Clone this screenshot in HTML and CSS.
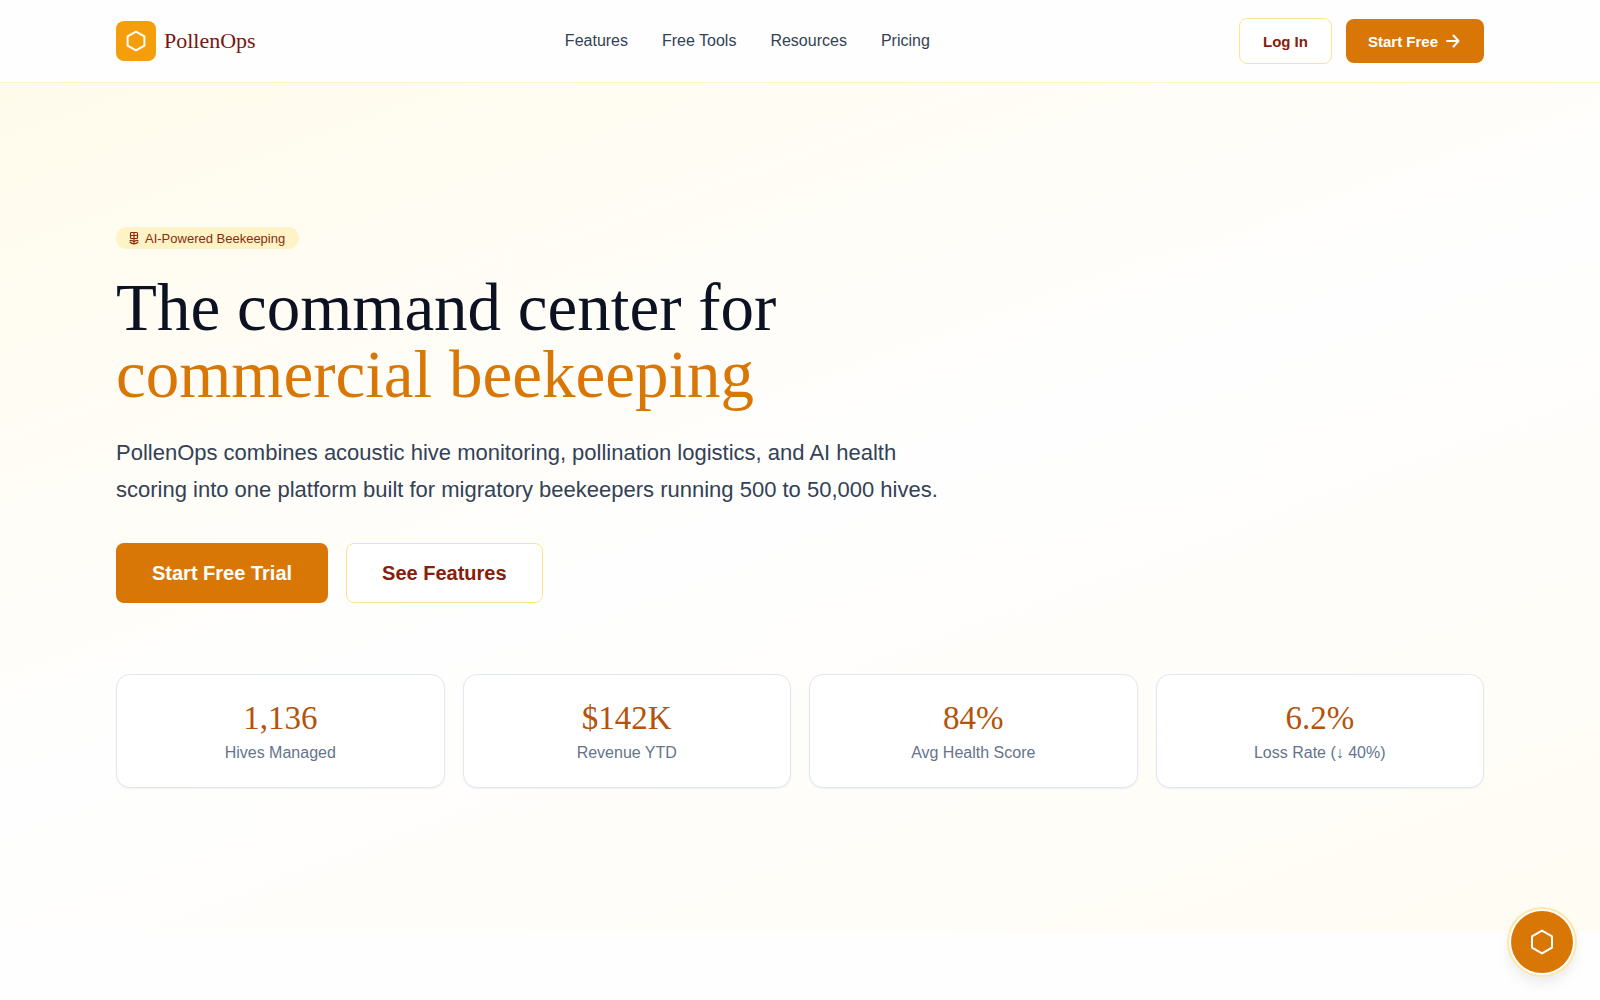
FILE: index.html
```html
<!DOCTYPE html>
<html lang="en">
  <head>
    <meta charset="UTF-8" />
    <meta name="viewport" content="width=device-width, initial-scale=1.0" />
    <title>PollenOps</title>
    <link rel="stylesheet" href="styles.css">
  </head>
  <body>
    <header class="header">
      <div class="container header-inner">
        <a href="#" class="logo">
          <span class="logo-mark">
            <svg width="24" height="24" viewBox="0 0 24 24"><path d="M12 2.6 L20.4 7.3 V16.7 L12 21.4 L3.6 16.7 V7.3 Z" /></svg>
          </span>
          <span>PollenOps</span>
        </a>
        <nav class="nav">
          <a href="#features">Features</a>
          <a href="#tools">Free Tools</a>
          <a href="#resources">Resources</a>
          <a href="#pricing">Pricing</a>
        </nav>
        <div class="actions">
          <button class="btn btn-outline">Log In</button>
          <button class="btn btn-primary">
            Start Free
            <svg width="16" height="16" viewBox="0 0 16 16"><path d="M1 8 H12.5 M7.5 2.5 L12.5 8 L7.5 13.5" /></svg>
          </button>
        </div>
      </div>
    </header>

    <main class="hero">
      <div class="container">
        <div class="badge">
          <svg width="10" height="14" viewBox="0 0 10 14">
            <rect x="1.5" y="1.5" width="7" height="6" rx="1" />
            <path d="M1.5 4.5 H8.5 M5 1.5 V12.5 M1 9.5 Q3.5 9 5 11 Q6.5 9 9 9.5 M1 11 Q2.5 12.8 5 12.8 Q7.5 12.8 9 11" />
          </svg>
          AI-Powered Beekeeping
        </div>
        <h1>The command center for<br><span>commercial beekeeping</span></h1>
        <p class="lead">PollenOps combines acoustic hive monitoring, pollination logistics, and AI health scoring into one platform built for migratory beekeepers running 500 to 50,000 hives.</p>
        <div class="cta">
          <button class="btn btn-primary btn-large">Start Free Trial</button>
          <button class="btn btn-outline btn-large" id="features">See Features</button>
        </div>
        <div class="stats">
          <div class="stat">
            <div class="stat-value">1,136</div>
            <div class="stat-label">Hives Managed</div>
          </div>
          <div class="stat">
            <div class="stat-value">$142K</div>
            <div class="stat-label">Revenue YTD</div>
          </div>
          <div class="stat">
            <div class="stat-value">84%</div>
            <div class="stat-label">Avg Health Score</div>
          </div>
          <div class="stat">
            <div class="stat-value">6.2%</div>
            <div class="stat-label">Loss Rate (↓ 40%)</div>
          </div>
        </div>
      </div>
    </main>

    <button class="fab" aria-label="Open assistant">
      <svg width="28" height="28" viewBox="0 0 28 28"><path d="M14 2.6 L24 8.4 V19.6 L14 25.4 L4 19.6 V8.4 Z" /></svg>
    </button>
  </body>
</html>
```
FILE: styles.css
```css
* {
  box-sizing: border-box;
}

body {
  margin: 0;
  font-family: "Liberation Sans", Arial, sans-serif;
  background-color: #fefefe;
  color: #0c1222;
}

a {
  color: inherit;
  text-decoration: none;
}

button {
  font-family: inherit;
  cursor: pointer;
}

svg {
  fill: none;
  stroke: currentColor;
  stroke-width: 2;
  stroke-linejoin: round;
  stroke-linecap: round;
}

.container {
  max-width: 1416px;
  margin: 0 auto;
  padding: 0 24px;
}

/* Header */
.header {
  background-color: #fefefe;
  border-bottom: 1px solid #fef3c7;
}

.header-inner {
  display: flex;
  justify-content: space-between;
  align-items: center;
  padding-top: 18px;
  padding-bottom: 18px;
}

.logo {
  display: flex;
  align-items: center;
  gap: 8px;
  font-family: "Liberation Serif", "Times New Roman", serif;
  font-size: 22px;
  color: #78150f;
}

.logo-mark {
  display: flex;
  align-items: center;
  justify-content: center;
  width: 40px;
  height: 40px;
  border-radius: 8px;
  background-color: #f59e0b;
  color: #ffffff;
}

.nav {
  display: flex;
  gap: 34px;
  font-size: 16px;
  line-height: 20px;
  color: #334155;
}

.actions {
  display: flex;
  align-items: center;
  gap: 14px;
}

.btn {
  display: inline-flex;
  align-items: center;
  justify-content: center;
  gap: 8px;
  height: 44px;
  padding: 0 22px;
  border: none;
  border-radius: 8px;
  font-size: 15px;
  font-weight: bold;
}

.btn-primary {
  background-color: #d97706;
  color: #ffffff;
}

.btn-outline {
  height: 46px;
  padding: 0 23px;
  border: 1px solid #fde68a;
  background-color: #ffffff;
  color: #85200a;
}

.btn-large {
  height: 60px;
  padding: 0 36px;
  font-size: 20px;
}

.btn-outline.btn-large {
  padding: 0 35px;
}

/* Hero */
.hero {
  padding: 144px 0 143px;
  background: linear-gradient(160deg, #fffbeb 0%, #fefefe 50%, #fffcf3 100%);
}

.badge {
  display: inline-flex;
  align-items: center;
  gap: 6px;
  height: 22px;
  padding: 0 14px 0 13px;
  border-radius: 11px;
  background-color: #fef3c7;
  font-size: 13px;
  color: #8a2c0d;
}

.badge svg {
  stroke-width: 1.2;
}

h1 {
  margin: 25px 0 26px;
  font-family: "Liberation Serif", "Times New Roman", serif;
  font-size: 67px;
  font-weight: normal;
  line-height: 67px;
}

h1 span {
  color: #d97706;
}

.lead {
  max-width: 840px;
  margin: 0 0 35px;
  font-size: 22px;
  line-height: 37px;
  color: #334155;
}

.cta {
  display: flex;
  gap: 18px;
  margin-bottom: 71px;
}

.stats {
  display: grid;
  grid-template-columns: repeat(4, 1fr);
  gap: 18px;
}

.stat {
  padding: 22px 22px 21px;
  border: 1px solid #e2e8f0;
  border-radius: 14px;
  background-color: #ffffff;
  box-shadow: 0 1px 2px rgba(15, 23, 42, 0.06);
  text-align: center;
}

.stat-value {
  font-family: "Liberation Serif", "Times New Roman", serif;
  font-size: 33px;
  line-height: 42px;
  color: #b45309;
}

.stat-label {
  font-size: 16px;
  line-height: 27px;
  color: #64748b;
}

/* Floating button */
.fab {
  position: fixed;
  right: 27px;
  bottom: 27px;
  display: flex;
  align-items: center;
  justify-content: center;
  width: 62px;
  height: 62px;
  padding: 0;
  border: none;
  border-radius: 50%;
  background-color: #d97706;
  color: #ffffff;
  box-shadow: 0 0 0 2px #ffffff, 0 0 0 4px #fde7ab, 0 8px 16px rgba(15, 23, 42, 0.1);
}
```
